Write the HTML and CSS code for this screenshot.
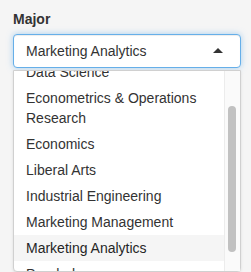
FILE: index.html
```html
<!DOCTYPE html>
<html lang="en">
<head>
    <meta charset="UTF-8">
    <title>Major</title>
    <link rel="stylesheet" href="styles.css">
</head>
<body>
    <div class="form-group">
        <label class="control-label" for="major">Major</label>
        <div class="select-control">
            <div class="select-input">
                <span class="current">Marketing Analytics</span>
                <span class="caret"></span>
            </div>
            <div class="dropdown">
                <div class="options">
                    <div class="list">
                        <div class="option">Data Science</div>
                        <div class="option">Econometrics &amp; Operations Research</div>
                        <div class="option">Economics</div>
                        <div class="option">Liberal Arts</div>
                        <div class="option">Industrial Engineering</div>
                        <div class="option">Marketing Management</div>
                        <div class="option active">Marketing Analytics</div>
                        <div class="option">Psychology</div>
                    </div>
                </div>
                <div class="scrollbar">
                    <div class="thumb"></div>
                </div>
            </div>
        </div>
    </div>
</body>
</html>
```

FILE: styles.css
```css
body {
    margin: 0;
    background: #f5f5f5;
    font-family: "Helvetica Neue", Helvetica, "Liberation Sans", Arial, sans-serif;
    font-size: 14px;
    line-height: 20px;
    color: #333;
}

.form-group {
    padding: 9px 10px 0 13px;
}

.control-label {
    display: block;
    font-weight: bold;
    margin-bottom: 5px;
}

.select-input {
    display: flex;
    align-items: center;
    justify-content: space-between;
    height: 20px;
    padding: 6px 17px 6px 12px;
    background: #fff;
    border: 1px solid #66afe9;
    border-radius: 4px;
    box-shadow: inset 0 1px 1px rgba(0, 0, 0, 0.075), 0 0 6px rgba(102, 175, 233, 0.55);
}

.caret {
    width: 0;
    height: 0;
    margin-top: -1px;
    border-style: solid;
    border-width: 0 5px 5px 5px;
    border-color: transparent transparent #333 transparent;
}

.dropdown {
    display: flex;
    height: 200px;
    margin-top: 2px;
    background: #fff;
    border: 1px solid #d0d0d0;
    border-radius: 0 0 4px 4px;
    box-shadow: 0 1px 3px rgba(0, 0, 0, 0.1);
}

.options {
    flex: 1;
    overflow: hidden;
}

.list {
    margin-top: -12px;
}

.option {
    padding: 3px 12px;
}

.option.active {
    background: #f5f5f5;
    color: #262626;
}

.scrollbar {
    width: 10px;
    padding: 35px 2px 0 3px;
    background: #fafafa;
    border-left: 1px solid #ececec;
}

.thumb {
    width: 8px;
    height: 146px;
    border-radius: 4px;
    background: #c1c1c1;
}
```
